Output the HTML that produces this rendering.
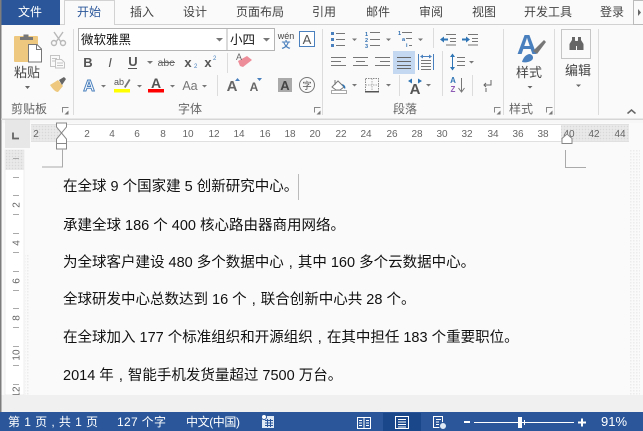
<!DOCTYPE html>
<html><head><meta charset="utf-8"><style>
html,body{margin:0;padding:0;background:#fafafa;width:643px;height:431px;overflow:hidden}
svg{display:block}
text{font-family:"Liberation Sans","Noto Sans CJK SC",sans-serif}
.t{font-size:12px;fill:#444;text-anchor:middle}
.d{font-size:14.5px;fill:#111}
.r{font-size:10px;fill:#666;text-anchor:middle}
.s{font-size:12px;fill:#fff}
.l{font-size:12px;fill:#666;text-anchor:middle}
.f{font-weight:bold;font-size:13px;fill:#555;text-anchor:middle}
</style></head><body>
<svg width="643" height="431" viewBox="0 0 643 431" xmlns="http://www.w3.org/2000/svg">
<defs>
<pattern id="dots" width="3" height="3" patternUnits="userSpaceOnUse"><rect width="3" height="3" fill="#e6e6e6"/><rect width="1" height="1" fill="#d8d8d8"/><rect x="1.5" y="1.5" width="1" height="1" fill="#f2f2f2"/></pattern>
<pattern id="sdots" width="3" height="3" patternUnits="userSpaceOnUse"><rect width="3" height="3" fill="#fafafa"/><rect width="1.5" height="1.5" fill="#ececec"/></pattern>
</defs>
<rect width="643" height="431" fill="#fafafa"/>
<!-- tabs -->
<rect x="0" y="24" width="643" height="1" fill="#d2d2d2"/>
<rect x="1" y="0" width="59" height="25" fill="#2B579A"/>
<rect x="0" y="0" width="1.500" height="431" fill="#7d7d7d"/>
<path d="M64.500 25V0.500H114.500V25" fill="#fafafa" stroke="#d2d2d2"/>
<rect x="65" y="24" width="49" height="1.500" fill="#fafafa"/>
<text x="30" y="16" class="t" style="fill:#fff">文件</text>
<text x="89" y="16" class="t" style="fill:#2B579A">开始</text>
<text x="142" y="16" class="t">插入</text>
<text x="195" y="16" class="t">设计</text>
<text x="260" y="16" class="t">页面布局</text>
<text x="324" y="16" class="t">引用</text>
<text x="378" y="16" class="t">邮件</text>
<text x="431" y="16" class="t">审阅</text>
<text x="484" y="16" class="t">视图</text>
<text x="548" y="16" class="t">开发工具</text>
<text x="612" y="16" class="t">登录</text>
<rect x="633.500" y="0.500" width="12" height="24" fill="#fafafa" stroke="#bbb"/>
<path d="M638 9l3 3.500-3 3.500z" fill="#666"/>

<!-- group separators -->
<g fill="#dcdcdc">
<rect x="73" y="29" width="1" height="86"/>
<rect x="322" y="29" width="1" height="86"/>
<rect x="503" y="29" width="1" height="86"/>
<rect x="554" y="29" width="1" height="86"/>
<rect x="598" y="29" width="1" height="86"/>
<rect x="227" y="53" width="1" height="20"/>
<rect x="217" y="75" width="1" height="21"/>
<rect x="399" y="75" width="1" height="21"/>
<rect x="433" y="28" width="1" height="20"/>
<rect x="442" y="51" width="1" height="45"/>
<rect x="472" y="75" width="1" height="21"/>
</g>

<!-- clipboard -->
<rect x="14" y="36" width="24" height="26" rx="1" fill="#edc87e"/>
<path d="M20 40v-3h3.500v-2.500h5V37H33v3z" fill="#777"/>
<path d="M28.500 44.500h8.500l4.500 4.500v13h-13z" fill="#fff" stroke="#777"/>
<path d="M36.500 44.500v5h5" fill="none" stroke="#777"/>
<text x="27" y="77" style="font-size:13px;fill:#444;text-anchor:middle">粘贴</text>
<path d="M25 86h5l-2.500 3z" fill="#666"/>
<!-- scissors -->
<g stroke="#b8b8b8" stroke-width="1.400" fill="none"><path d="M54 32l7 10M63 32l-7 10"/><circle cx="54" cy="43" r="2.500"/><circle cx="63" cy="43" r="2.500"/></g>
<!-- copy -->
<g stroke="#c4c4c4" fill="#fafafa"><path d="M50.500 55.500h9v11h-9z"/><path d="M55.500 59.500h6l3 3v5.500h-9z"/><path d="M52 58.500h5M52 61h3M57 63h6M57 65.500h6" fill="none"/></g>
<!-- brush -->
<path d="M50 85l8-5 5 6-5 6c-3 0-6-4-8-7z" fill="#edc87e"/>
<path d="M59 80l5-3 2 2-4 6z" fill="#666"/>
<text x="29" y="113" class="l">剪贴板</text>
<g id="lg"><path d="M62.500 112.500v-5h6" fill="none" stroke="#888"/><path d="M68.500 114.500h-4l4-4z" fill="#777"/></g>

<!-- font combos -->
<rect x="78.500" y="28.500" width="196" height="22" fill="#fff" stroke="#b4b4b4"/>
<rect x="226.500" y="28.500" width="1" height="22" fill="#b4b4b4"/>
<text x="81" y="44" style="font-size:12.500px;fill:#111">微软雅黑</text>
<text x="230" y="44" style="font-size:12.500px;fill:#111">小四</text>
<path d="M216 38h7l-3.500 3.500zM263 38h7l-3.500 3.500z" fill="#777"/>
<text x="286" y="39" style="font-size:9px;fill:#444;text-anchor:middle">wén</text>
<text x="286" y="48" style="font-size:9px;fill:#4a80bd;text-anchor:middle;font-weight:bold">文</text>
<rect x="299.500" y="31.500" width="15" height="15" fill="#fff" stroke="#4a80bd"/>
<text x="307" y="44" style="font-size:13px;fill:#555;text-anchor:middle">A</text>

<!-- row 2 -->
<text x="88" y="67" class="f">B</text>
<text x="110" y="67" class="f" style="font-style:italic;font-weight:normal">I</text>
<text x="133" y="66" class="f">U</text><rect x="128" y="68" width="9" height="1" fill="#555"/>
<text x="166" y="66" style="font-size:10.500px;fill:#666;text-anchor:middle">abc</text><rect x="159" y="62" width="16" height="1" fill="#666"/>
<text x="188" y="67" class="f">x</text><text x="194" y="68" style="font-size:6px;fill:#4a80bd">2</text>
<text x="208" y="67" class="f">x</text><text x="213" y="60" style="font-size:6px;fill:#4a80bd">2</text>
<path d="M147 61h6l-3 3z" fill="#777"/>
<!-- eraser -->
<path d="M238 61l9-5 5 4-9 7-3-1z" fill="#ee8d9a"/>
<text x="239" y="60" style="font-size:9px;fill:#666;text-anchor:middle">A</text>

<!-- row 3 -->
<text x="89" y="91" style="font-size:16px;fill:#fff;stroke:#4a80bd;stroke-width:1;text-anchor:middle;font-weight:bold">A</text>
<path d="M101 85h5l-2.500 2.500zM137 85h5l-2.500 2.500zM170 85h5l-2.500 2.500zM202 85h5l-2.500 2.500z" fill="#777"/>
<text x="119" y="85" style="font-size:9px;fill:#555;text-anchor:middle">ab</text>
<path d="M124 87l5-8 1.500 1-5 8z" fill="#777"/>
<rect x="114" y="89" width="16" height="3.500" fill="#ffff00"/>
<text x="156" y="88" style="font-size:14px;fill:#555;text-anchor:middle;font-weight:bold">A</text>
<rect x="148" y="89" width="16" height="3.500" fill="#ff0000"/>
<text x="190" y="90" style="font-size:12.500px;fill:#777;text-anchor:middle">Aa</text>
<text x="232" y="91" style="font-size:15px;fill:#666;text-anchor:middle;font-weight:bold">A</text><path d="M235 81l2.500-3 2.500 3z" fill="#4a80bd"/>
<text x="254" y="91" style="font-size:12px;fill:#666;text-anchor:middle;font-weight:bold">A</text><path d="M257 78l2.500 3 2.500-3z" fill="#4a80bd"/>
<rect x="278" y="78" width="14" height="14" fill="#aaa"/>
<text x="285" y="90" style="font-size:13px;fill:#444;text-anchor:middle;font-weight:bold">A</text>
<circle cx="307" cy="85" r="7.500" fill="none" stroke="#777"/>
<text x="307" y="89" style="font-size:9.500px;fill:#555;text-anchor:middle">字</text>
<text x="190" y="113" class="l">字体</text>
<use href="#lg" x="252"/>

<!-- bullets -->
<g fill="#4a80bd"><rect x="331" y="32" width="3" height="3"/><rect x="331" y="38" width="3" height="3"/><rect x="331" y="44" width="3" height="3"/></g>
<path d="M336 33.500h9M336 39.500h9M336 45.500h9" stroke="#777" fill="none"/>
<text x="365" y="36" style="font-size:5.500px;fill:#2b6cb0;font-weight:bold">1</text><text x="365" y="42" style="font-size:5.500px;fill:#2b6cb0;font-weight:bold">2</text><text x="365" y="48" style="font-size:5.500px;fill:#2b6cb0;font-weight:bold">3</text>
<path d="M370 32.500h10M370 39.500h10M370 45.500h10" stroke="#777" fill="none"/>
<text x="398" y="35" style="font-size:5.500px;fill:#2b6cb0;font-weight:bold">1</text><text x="402" y="41" style="font-size:5.500px;fill:#2b6cb0;font-weight:bold">a</text><text x="406" y="47" style="font-size:5.500px;fill:#2b6cb0;font-weight:bold">i</text>
<path d="M402 32.500h10M406 38.500h6M409 45.500h3" stroke="#777" fill="none"/>
<path d="M352 38.500h5l-2.500 2.500zM386 38.500h5l-2.500 2.500zM418 38.500h5l-2.500 2.500zM469 61h5l-2.500 2.500zM352 84h5l-2.500 2.500zM386 84h5l-2.500 2.500zM426 84h5l-2.500 2.500z" fill="#777"/>
<!-- indents -->
<path d="M446 34.500h10M450 38.500h6M450 41.500h6M446 45h10M468 34.500h10M472 38.500h6M472 41.500h6M468 45h10" stroke="#777" fill="none"/>
<path d="M440 39.500l4-3v2h4v2h-4v2zM470 39.500l-4-3v2h-4v2h4v2z" fill="#2f75b5"/>
<!-- align -->
<rect x="393" y="51" width="22" height="23" fill="#c5d8f1"/>
<path d="M331 57.500h15M331 61.500h10M331 65.500h15M353 57.500h15M356 61.500h9M353 65.500h15M375 57.500h15M380 61.500h10M375 65.500h15" stroke="#777" fill="none"/>
<path d="M397 57.500h14M397 61.500h14M397 65.500h14M397 68.500h14" stroke="#666" fill="none"/>
<path d="M418.500 54v16M433.500 54v16" stroke="#4a80bd" fill="none"/>
<path d="M421 60.500h10M421 63.500h10M421 66.500h10M421 69.500h10" stroke="#777" fill="none"/>
<path d="M421 56.500h10" stroke="#4a80bd" fill="none"/>
<path d="M420 56.500l3-2v4zM432 56.500l-3-2v4z" fill="#4a80bd"/>
<!-- line spacing -->
<path d="M452.500 55v15" stroke="#2f75b5" fill="none"/><path d="M450 57l2.500-3.500 2.500 3.500zM450 67l2.500 3.500 2.500-3.500z" fill="#2f75b5"/>
<path d="M457 57.500h8M457 61.500h8M457 65.500h8" stroke="#777" fill="none"/>
<!-- shading -->
<path d="M332 87l6-6 6 6-4 3h-4z" fill="#fff" stroke="#777"/><path d="M335 80v5" stroke="#777"/>
<path d="M342 84c3 1 4 3 3 5l-1-1z" fill="#2f75b5"/>
<rect x="331.500" y="90.500" width="15" height="3" fill="#fff" stroke="#aaa"/>
<!-- borders -->
<rect x="365.500" y="78.500" width="13" height="13" fill="none" stroke="#888" stroke-dasharray="1.500 1"/>
<path d="M365.500 85h13M372 78.500v13" stroke="#aaa" stroke-dasharray="1.500 1"/>
<rect x="365" y="91" width="14" height="1.500" fill="#555"/>
<!-- A swap -->
<text x="415" y="94" style="font-size:15px;fill:#555;text-anchor:middle;font-weight:bold">A</text>
<path d="M408 81l4-2.500v5zM422 81l-4-2.500v5z" fill="#2f75b5"/>
<!-- sort -->
<text x="453" y="83" style="font-size:8px;fill:#2f75b5;font-weight:bold;text-anchor:middle">A</text>
<text x="453" y="92" style="font-size:8px;fill:#8e5bb5;font-weight:bold;text-anchor:middle">Z</text>
<path d="M461.500 78v13M458.500 88l3 4 3-4" stroke="#777" fill="none"/>
<!-- pilcrow -->
<path d="M491 80v5h-7M486 83l-2 2 2 2M486 88v4" stroke="#666" fill="none"/>
<text x="405" y="113" class="l">段落</text>
<use href="#lg" x="432"/>

<!-- styles -->
<text x="527" y="54" style="font-size:28px;fill:#4a80bd;text-anchor:middle;font-weight:bold">A</text>
<path d="M533 51l11-11 2 2-9 12z" fill="#777"/>
<path d="M522 62c1-4 4-8 8-8 3 1 4 4 2 6-2 2-7 3-10 2z" fill="#4a80bd"/>
<text x="529" y="77" style="font-size:13px;fill:#444;text-anchor:middle">样式</text>
<path d="M527.500 86h5l-2.500 2.500z" fill="#666"/>
<text x="521" y="113" class="l">样式</text>
<use href="#lg" x="484"/>

<!-- editing -->
<rect x="561.500" y="29.500" width="29" height="29" fill="#fafafa" stroke="#c6c6c6"/>
<path d="M569.500 50v-6l2.500-4v-3h3v3l1 4v6zM583.500 50v-6l-2.500-4v-3h-3v3l-1 4v6z" fill="#666"/>
<rect x="575" y="41" width="3" height="5" fill="#666"/>
<text x="578" y="75" style="font-size:13px;fill:#444;text-anchor:middle">编辑</text>
<path d="M576 84.500h5l-2.500 2.500z" fill="#666"/>
<path d="M627.500 113.500l4-3.500 4 3.500" stroke="#666" stroke-width="1.500" fill="none"/>

<!-- ribbon bottom -->
<rect x="1" y="118.500" width="642" height="1.500" fill="#d6d6d6"/>
<rect x="2" y="120" width="641" height="3" fill="#f7f7f7"/>

<!-- horizontal ruler -->
<rect x="31" y="124" width="30" height="18" fill="url(#dots)"/>
<rect x="561" y="124" width="68" height="18" fill="url(#dots)"/>
<rect x="61" y="124" width="500" height="18" fill="#fff"/>
<path d="M31 124.500H629M31 141.500H629" stroke="#e0e0e0" fill="none"/>
<rect x="5" y="120" width="25" height="28" fill="#e7e7e7"/>
<path d="M13 132.500v6h6" stroke="#666" stroke-width="1.800" fill="none"/>
<text class="r" x="36" y="137">2</text>
<text class="r" x="87" y="137">2</text><text class="r" x="112" y="137">4</text><text class="r" x="137" y="137">6</text><text class="r" x="163" y="137">8</text><text class="r" x="188" y="137">10</text><text class="r" x="214" y="137">12</text><text class="r" x="239" y="137">14</text><text class="r" x="265" y="137">16</text><text class="r" x="290" y="137">18</text><text class="r" x="315" y="137">20</text><text class="r" x="341" y="137">22</text><text class="r" x="366" y="137">24</text><text class="r" x="392" y="137">26</text><text class="r" x="417" y="137">28</text><text class="r" x="442" y="137">30</text><text class="r" x="467" y="137">32</text><text class="r" x="493" y="137">34</text><text class="r" x="518" y="137">36</text><text class="r" x="543" y="137">38</text><text class="r" x="569" y="137">40</text><text class="r" x="594" y="137">42</text><text class="r" x="620" y="137">44</text>
<!-- indent markers -->
<path d="M56.500 123h10v4l-5 6-5-6z" fill="#fff" stroke="#888"/>
<path d="M61.500 133l5 6v4.500h-10V139z" fill="#fff" stroke="#888"/>
<rect x="56.500" y="143.500" width="10" height="5.500" fill="#fff" stroke="#888"/>
<path d="M567 134l-5 4.500v5h10v-5z" fill="#fff" stroke="#888"/>
<!-- margin corners -->
<path d="M62.500 149v18H42M565.500 150v17.500H586" stroke="#aaa" fill="none"/>

<!-- vertical ruler -->
<rect x="5" y="150" width="19" height="245" fill="#fff" stroke="#e4e4e4" stroke-width=".6"/>
<rect x="5.500" y="150" width="18.500" height="20" fill="url(#dots)"/>
<rect x="25" y="255" width="5" height="140" fill="url(#sdots)"/>
<g fill="#aaa"><rect x="13" y="158" width="6" height="1"/><rect x="13" y="177" width="6" height="1"/><rect x="13" y="195" width="6" height="1"/><rect x="13" y="214" width="6" height="1"/><rect x="13" y="233" width="6" height="1"/><rect x="13" y="252" width="6" height="1"/><rect x="13" y="271" width="6" height="1"/><rect x="13" y="290" width="6" height="1"/><rect x="13" y="308" width="6" height="1"/><rect x="13" y="327" width="6" height="1"/><rect x="13" y="346" width="6" height="1"/><rect x="13" y="365" width="6" height="1"/><rect x="13" y="384" width="6" height="1"/></g>
<text class="r" transform="translate(19.500 205) rotate(-90)" style="font-size:10px">2</text>
<text class="r" transform="translate(19.500 243) rotate(-90)" style="font-size:10px">4</text>
<text class="r" transform="translate(19.500 281) rotate(-90)" style="font-size:10px">6</text>
<text class="r" transform="translate(19.500 318) rotate(-90)" style="font-size:10px">8</text>
<text class="r" transform="translate(19.500 355) rotate(-90)" style="font-size:10px">10</text>
<text class="r" transform="translate(19.500 392) rotate(-90)" style="font-size:10px">12</text>
<rect x="629" y="150" width="11" height="245" fill="url(#sdots)"/>

<!-- document -->
<text class="d" x="63" y="191">在全球 9 个国家建 5 创新研究中心。</text>
<rect x="298" y="174" width="1" height="26" fill="#bbb"/>
<text class="d" x="63" y="230">承建全球 186 个 400 核心路由器商用网络。</text>
<text class="d" x="63" y="267">为全球客户建设 480 多个数据中心 <tspan dx="1">,</tspan> <tspan dx="1">其中</tspan> 160 多个云数据中心。</text>
<text class="d" x="63" y="304">全球研发中心总数达到 16 个 <tspan dx="1">,</tspan> <tspan dx="1">联合创新中心共</tspan> 28 个。</text>
<text class="d" x="63" y="342">在全球加入 177 个标准组织和开源组织 <tspan dx="1">,</tspan> <tspan dx="1">在其中担任</tspan> 183 个重要职位。</text>
<text class="d" x="63" y="380">2014 年 <tspan dx="1">,</tspan> <tspan dx="1">智能手机发货量超过</tspan> 7500 万台。</text>

<!-- bottom -->
<rect x="1.500" y="395" width="642" height="17" fill="#f0f0f0"/>
<rect x="0" y="412" width="643" height="19" fill="#2B579A"/>
<text class="s" x="8" y="426" textLength="90">第 1 页 , 共 1 页</text>
<text class="s" x="117" y="426" textLength="49">127 个字</text>
<text class="s" x="186" y="426" textLength="54">中文(中国)</text>
<path d="M262 416h12v12h-12z" fill="#dfe8f5"/><path d="M265 420.500h8M265 423h8M265 425.500h8M267.500 419v8M270.500 419v8" stroke="#2B579A" fill="none"/><circle cx="264" cy="417" r="2.500" fill="#fff" stroke="#2B579A"/>
<!-- view icons -->
<rect x="383" y="413" width="38" height="18" fill="#19478a"/>
<g stroke="#fff" fill="none"><path d="M357.500 417.500h13v11h-13zM364 417.500v11M359 420.500h3M359 423h3M359 425.500h3M366 420.500h3M366 423h3M366 425.500h3"/></g>
<g stroke="#fff" fill="none"><path d="M395.500 416.500h13v12h-13zM398 419.500h8M398 422h8M398 424.500h8M398 427h8"/></g>
<g stroke="#fff" fill="none"><path d="M433.500 416.500h9v11h-9zM436 419.500h5M436 422h3M436 424.500h3"/></g><circle cx="443" cy="426" r="3.500" fill="#dfe8f5" stroke="#2B579A"/>
<!-- zoom -->
<rect x="464" y="421" width="6" height="2" fill="#fff"/>
<rect x="474" y="422" width="100" height="1" fill="#fff"/>
<rect x="518" y="417" width="4" height="11" fill="#fff"/>
<rect x="524" y="420" width="1" height="5" fill="#fff"/>
<path d="M578 422.500h8M582 418.500v8" stroke="#fff" stroke-width="2" fill="none"/>
<text class="s" x="601" y="426" style="font-size:13px">91%</text>
</svg>
</body></html>
